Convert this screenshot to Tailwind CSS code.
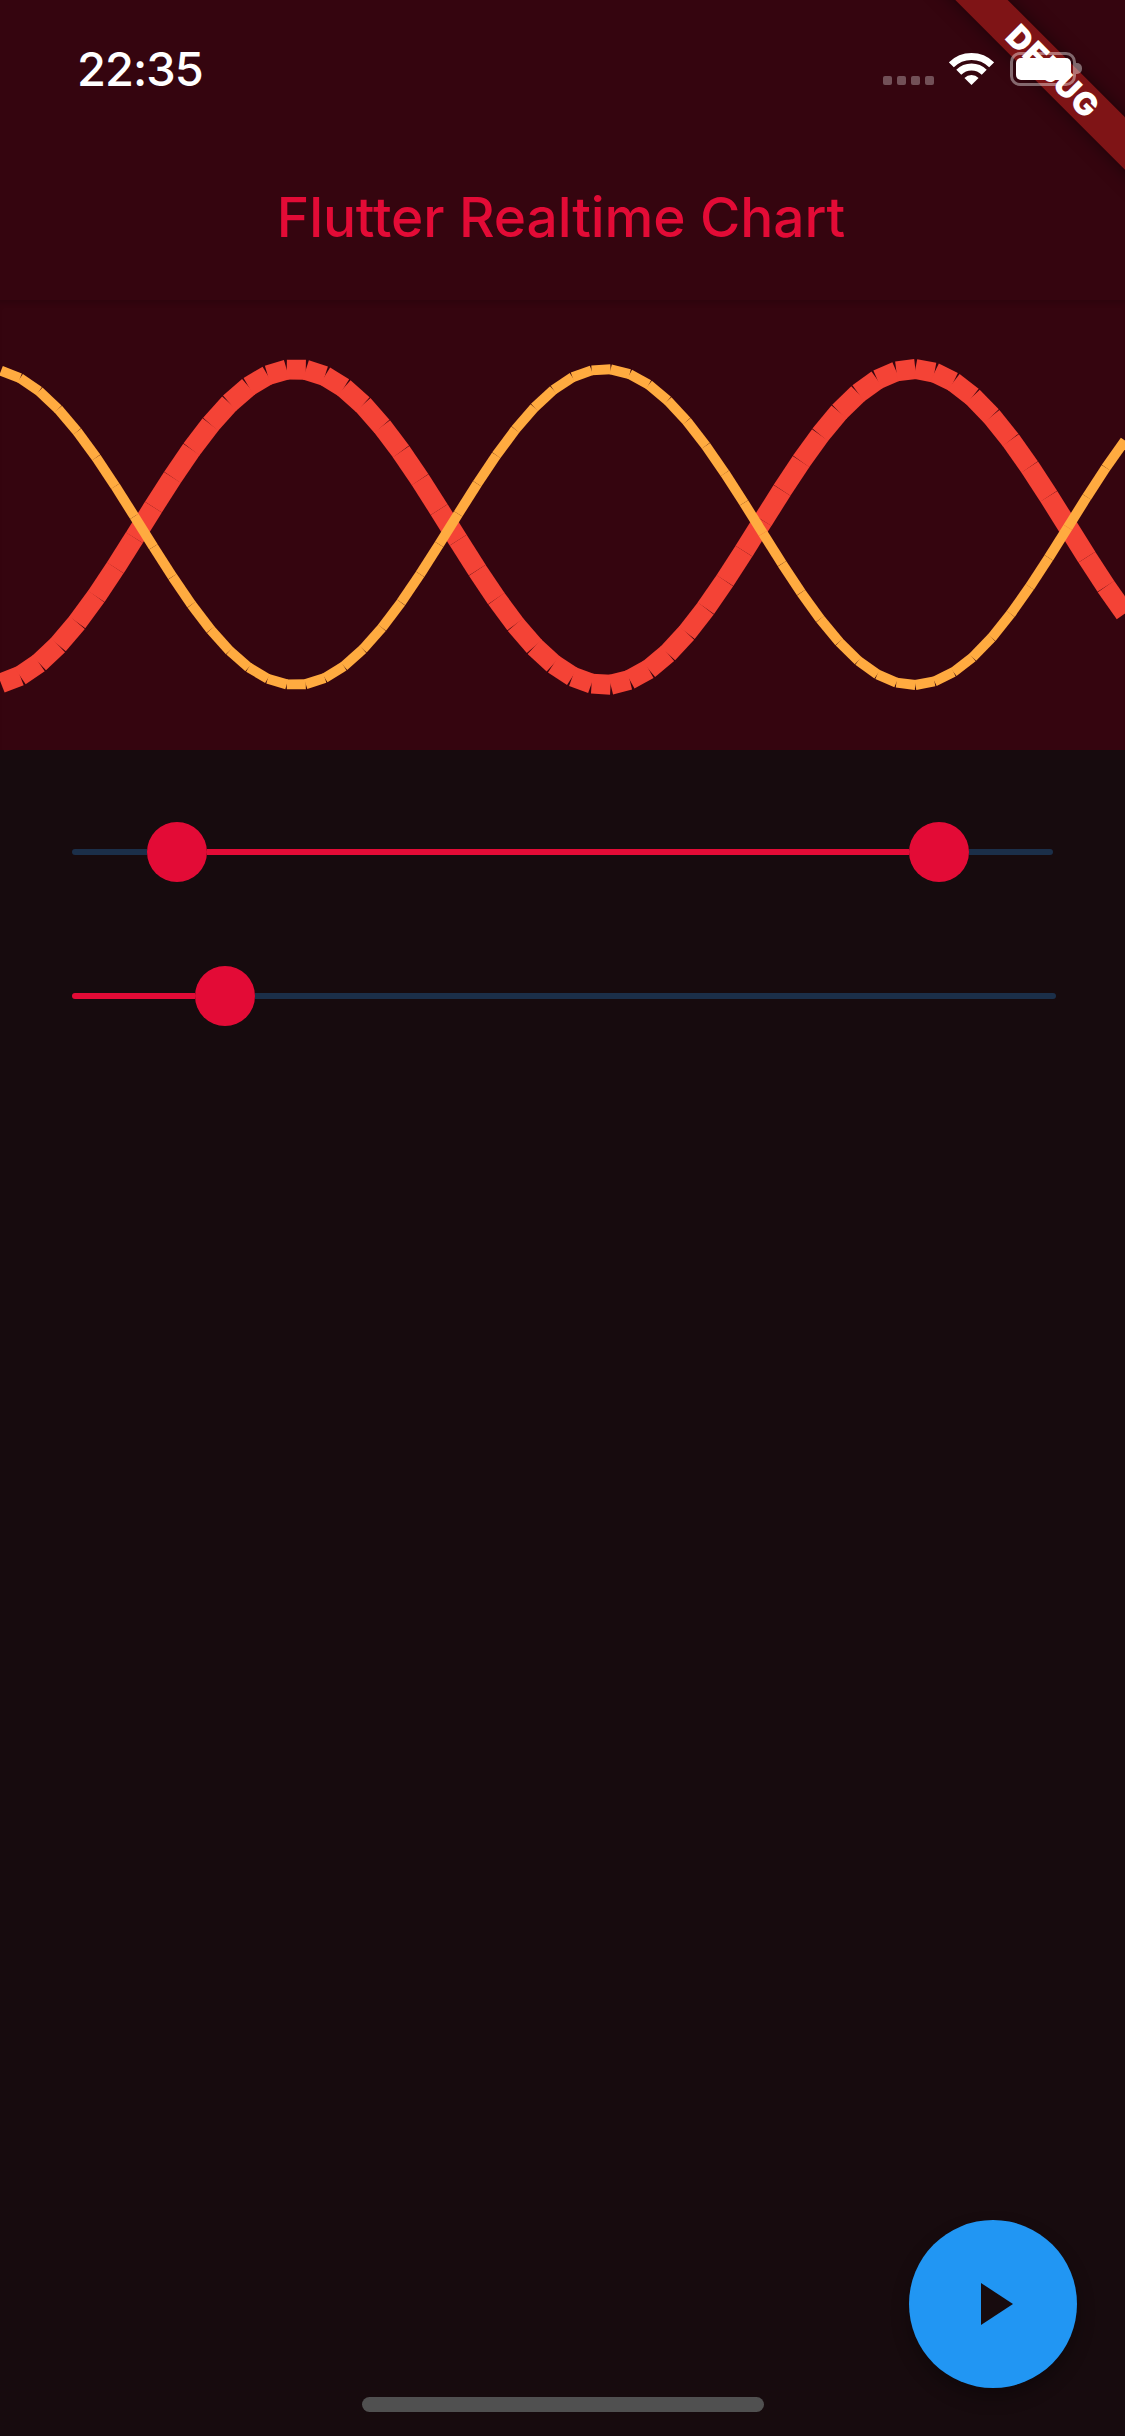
<!DOCTYPE html>
<html lang="en">
<head>
    <meta charset="UTF-8">
    <meta name="viewport" content="width=device-width, initial-scale=1.0">
    <title>Flutter Realtime Chart</title>
    <script src="https://cdn.jsdelivr.net/npm/@tailwindcss/browser@4"></script>
</head>
<body class="bg-[#170b0e] font-['Inter',sans-serif] w-[1125px] h-[2436px] relative overflow-hidden">
    <!-- app bar with status bar -->
    <header class="bg-[#35050f] h-[300px] flex flex-col">
        <div class="relative z-20 h-[130px] flex items-start pl-[77px] pr-[43px] pt-[41px]">
            <span class="text-white text-[47px] leading-[56px] font-medium tracking-[-1px]">22:35</span>
            <div class="ml-auto flex items-start pt-[11px]">
                <div class="flex gap-[5px] mt-[24px] mr-[15px]">
                    <span class="w-[9px] h-[9px] rounded-[2px] bg-white/30"></span>
                    <span class="w-[9px] h-[9px] rounded-[2px] bg-white/30"></span>
                    <span class="w-[9px] h-[9px] rounded-[2px] bg-white/30"></span>
                    <span class="w-[9px] h-[9px] rounded-[2px] bg-white/30"></span>
                </div>
                <svg class="mt-[1px] mr-[16px]" width="45" height="32" viewBox="0 0 45 32" fill="none">
                    <path d="M2.35 11.85A28.5 28.5 0 0 1 42.65 11.85" stroke="#fff" stroke-width="7"/>
                    <path d="M9.77 19.27A18 18 0 0 1 35.23 19.27" stroke="#fff" stroke-width="7"/>
                    <path d="M22.5 32L15.43 24.93A10 10 0 0 1 29.57 24.93Z" fill="#fff"/>
                </svg>
                <div class="flex items-center">
                    <div class="w-[66px] h-[34px] rounded-[10px] border-[3px] border-white/40 relative">
                        <div class="absolute left-[3px] top-[3px] w-[55px] h-[22px] rounded-[5px] bg-white"></div>
                    </div>
                    <span class="w-[6px] h-[11px] rounded-r-[5px] bg-white/40 -mt-[2px]"></span>
                </div>
            </div>
        </div>
        <h1 class="text-[#e30b36] text-[55px] leading-[62px] text-center font-[450] tracking-[-0.1px] mt-[56px] pr-[3px]">Flutter Realtime Chart</h1>
    </header>

    <!-- debug ribbon -->
    <div class="absolute top-0 right-0 w-[300px] h-[300px] overflow-hidden z-10 pointer-events-none">
        <div class="absolute left-[27px] top-[52px] w-[400px] h-[37px] rotate-45 bg-[#7f1416] shadow-[0_0_18px_rgba(0,0,0,0.5)] flex items-center justify-center">
            <span class="text-white text-[32px] leading-none font-black tracking-[1px] ml-[3px]">DEBUG</span>
        </div>
    </div>

    <!-- chart -->
    <section class="bg-[#35050f] h-[450px] shadow-[inset_0_6px_6px_-4px_rgba(0,0,0,0.18)]">
        <svg id="chart" width="1125" height="450" viewBox="0 300 1125 450"></svg>
    </section>

    <!-- sliders -->
    <main class="pl-[72px] pt-[72px] flex flex-col gap-[84px]">
        <div class="flex items-center h-[60px]">
            <span class="w-[75px] h-[6px] rounded-l-full bg-[#1b2f49]"></span>
            <span class="w-[60px] h-[60px] rounded-full bg-[#e30b36]"></span>
            <span class="w-[702px] h-[6px] bg-[#e30b36]"></span>
            <span class="w-[60px] h-[60px] rounded-full bg-[#e30b36]"></span>
            <span class="w-[84px] h-[6px] rounded-r-full bg-[#1b2f49]"></span>
        </div>
        <div class="flex items-center h-[60px]">
            <span class="w-[123px] h-[6px] rounded-l-full bg-[#e30b36]"></span>
            <span class="w-[60px] h-[60px] rounded-full bg-[#e30b36]"></span>
            <span class="w-[801px] h-[6px] rounded-r-full bg-[#1b2f49]"></span>
        </div>
    </main>

    <button class="absolute left-[909px] top-[2220px] w-[168px] h-[168px] rounded-full bg-[#2196f3] shadow-[0_9px_18px_rgba(0,0,0,0.3)] flex items-center justify-center">
        <svg width="32" height="42" viewBox="0 0 32 42" class="ml-[8px]"><path d="M0 0L32 21L0 42Z" fill="#170b0e"/></svg>
    </button>
    <div class="absolute left-[362px] top-[2397px] w-[402px] h-[15px] rounded-[8px] bg-[#505050]"></div>

    <script>
        // line segments with butt caps, so the joins leave small wedges like the chart does
        const svg = document.getElementById('chart');
        const dx = 19.05, period = 618, peakX = 913.5, midY = 527, amp = 158;

        function series(sign, color, width) {
            for (let k = 0; k < 59; k++) {
                const x1 = 1 + k * dx, x2 = x1 + dx;
                const y = x => midY - sign * amp * Math.cos(2 * Math.PI * (x - peakX) / period);
                const line = document.createElementNS('http://www.w3.org/2000/svg', 'line');
                line.setAttribute('x1', x1);
                line.setAttribute('y1', y(x1));
                line.setAttribute('x2', x2);
                line.setAttribute('y2', y(x2));
                line.setAttribute('stroke', color);
                line.setAttribute('stroke-width', width);
                svg.appendChild(line);
            }
        }

        series(1, '#f44336', 20);
        series(-1, '#ffab40', 10);
    </script>
</body>
</html>
